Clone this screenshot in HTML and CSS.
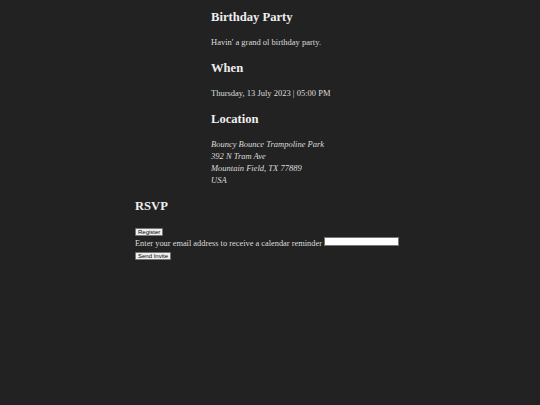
FILE: index.html
```html
<!DOCTYPE html>
<html>
<head>
<meta charset="utf-8">
<link rel="stylesheet" href="styles.css">
</head>
<body>
<div class="page">
  <section class="event">
    <h2 class="title">Birthday Party</h2>
    <p class="text">Havin' a grand ol birthday party.</p>
    <h2 class="title">When</h2>
    <p class="text">Thursday, 13 July 2023 | 05:00 PM</p>
    <h2 class="title">Location</h2>
    <address class="address">
      Bouncy Bounce Trampoline Park<br>
      392 N Tram Ave<br>
      Mountain Field, TX 77889<br>
      USA
    </address>
  </section>
  <section class="rsvp">
    <h2 class="title">RSVP</h2>
    <div class="form">
      <button class="btn" type="button">Register</button>
      <div class="row">Enter your email address to receive a calendar reminder <input class="email" type="text"></div>
      <button class="btn" type="button">Send Invite</button>
    </div>
  </section>
</div>
</body>
</html>
```
FILE: styles.css
```css
html, body {
  margin: 0;
  background: #222222;
}
body {
  color: #dddddd;
  font-family: "Liberation Serif", serif;
  font-size: 8.5px;
  height: 405px;
}
.page {
  padding-top: 5px;
}
.event {
  margin-left: 211px;
}
.title {
  font-size: 12.6px;
  line-height: 16px;
  font-weight: bold;
  color: #eeeeee;
  margin: 4px 0 11px;
}
.text {
  margin: 0 0 12px;
  line-height: 12px;
}
.address {
  font-style: italic;
  line-height: 12px;
  margin: 0;
}
.rsvp {
  margin-left: 135px;
  margin-top: 12px;
}
.form {
  margin-top: 14px;
}
.btn {
  font-family: "Liberation Sans", Arial, sans-serif;
  font-size: 6px;
  padding: 0 2px;
  background: #efefef;
  color: #000;
  border: 1px solid #767676;
  border-radius: 1px;
  line-height: 6px;
  display: block;
}
.row {
  font-size: 8.4px;
  line-height: 16px;
  color: #dddddd;
}
.email {
  width: 73px;
  height: 7px;
  padding: 0;
  border: 1px solid #767676;
  background: #fff;
  vertical-align: baseline;
}
```
